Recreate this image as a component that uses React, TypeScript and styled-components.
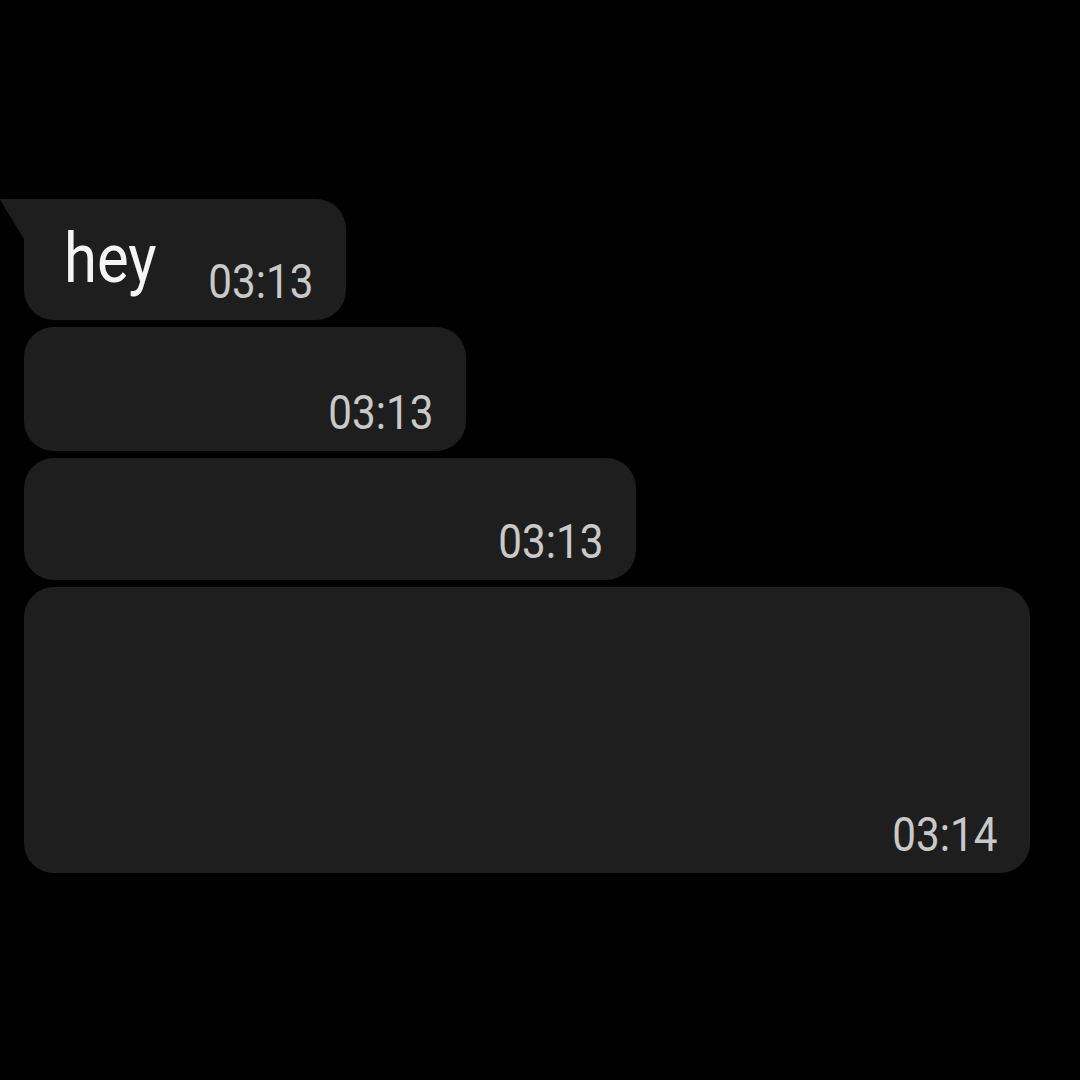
import styled, { createGlobalStyle } from 'styled-components'

const GlobalStyle = createGlobalStyle`
  html, body {
    margin: 0;
    padding: 0;
    background: #000;
  }
  body {
    width: 1080px;
    height: 1080px;
    overflow: hidden;
    font-family: Roboto, "Noto Sans", sans-serif;
  }
`

const StyledThread = styled.div`
  display: flex;
  flex-direction: column;
  align-items: flex-start;
  gap: 7px;
  padding: 199px 0 0 24px;
`

const StyledBubble = styled.div<{ $width: number; $height: number; $tail?: boolean }>`
  position: relative;
  box-sizing: border-box;
  width: ${(p) => p.$width}px;
  height: ${(p) => p.$height}px;
  display: flex;
  align-items: flex-end;
  justify-content: space-between;
  padding: 0 32px 14px 40px;
  background: #1e1e1e;
  border-radius: ${(p) => (p.$tail ? '0 30px 30px 30px' : '30px')};

  ${(p) =>
    p.$tail &&
    `
    &::before {
      content: '';
      position: absolute;
      top: 0;
      left: -24px;
      width: 25px;
      height: 42px;
      background: #1e1e1e;
      clip-path: polygon(0 0, 100% 0, 100% 100%, 2px 4px);
    }
  `}
`

const StyledBody = styled.span`
  display: inline-block;
  align-self: flex-start;
  margin-top: 26px;
  font-size: 68px;
  line-height: 1;
  color: #f4f4f4;
  transform: scaleX(0.88);
  transform-origin: left center;
`

const StyledTime = styled.span`
  display: inline-block;
  margin-left: auto;
  font-size: 48px;
  line-height: 1;
  color: #c9c9c9;
  transform: scaleX(0.88);
  transform-origin: right bottom;
`

const messages = [
  { id: 1, text: 'hey', time: '03:13', width: 322, height: 121, tail: true },
  { id: 2, text: '', time: '03:13', width: 442, height: 124 },
  { id: 3, text: '', time: '03:13', width: 612, height: 122 },
  { id: 4, text: '', time: '03:14', width: 1006, height: 286 },
]

export default function App() {
  return (
    <>
      <GlobalStyle />
      <StyledThread>
        {messages.map((m) => (
          <StyledBubble key={m.id} $width={m.width} $height={m.height} $tail={m.tail}>
            {m.text && <StyledBody>{m.text}</StyledBody>}
            <StyledTime>{m.time}</StyledTime>
          </StyledBubble>
        ))}
      </StyledThread>
    </>
  )
}
